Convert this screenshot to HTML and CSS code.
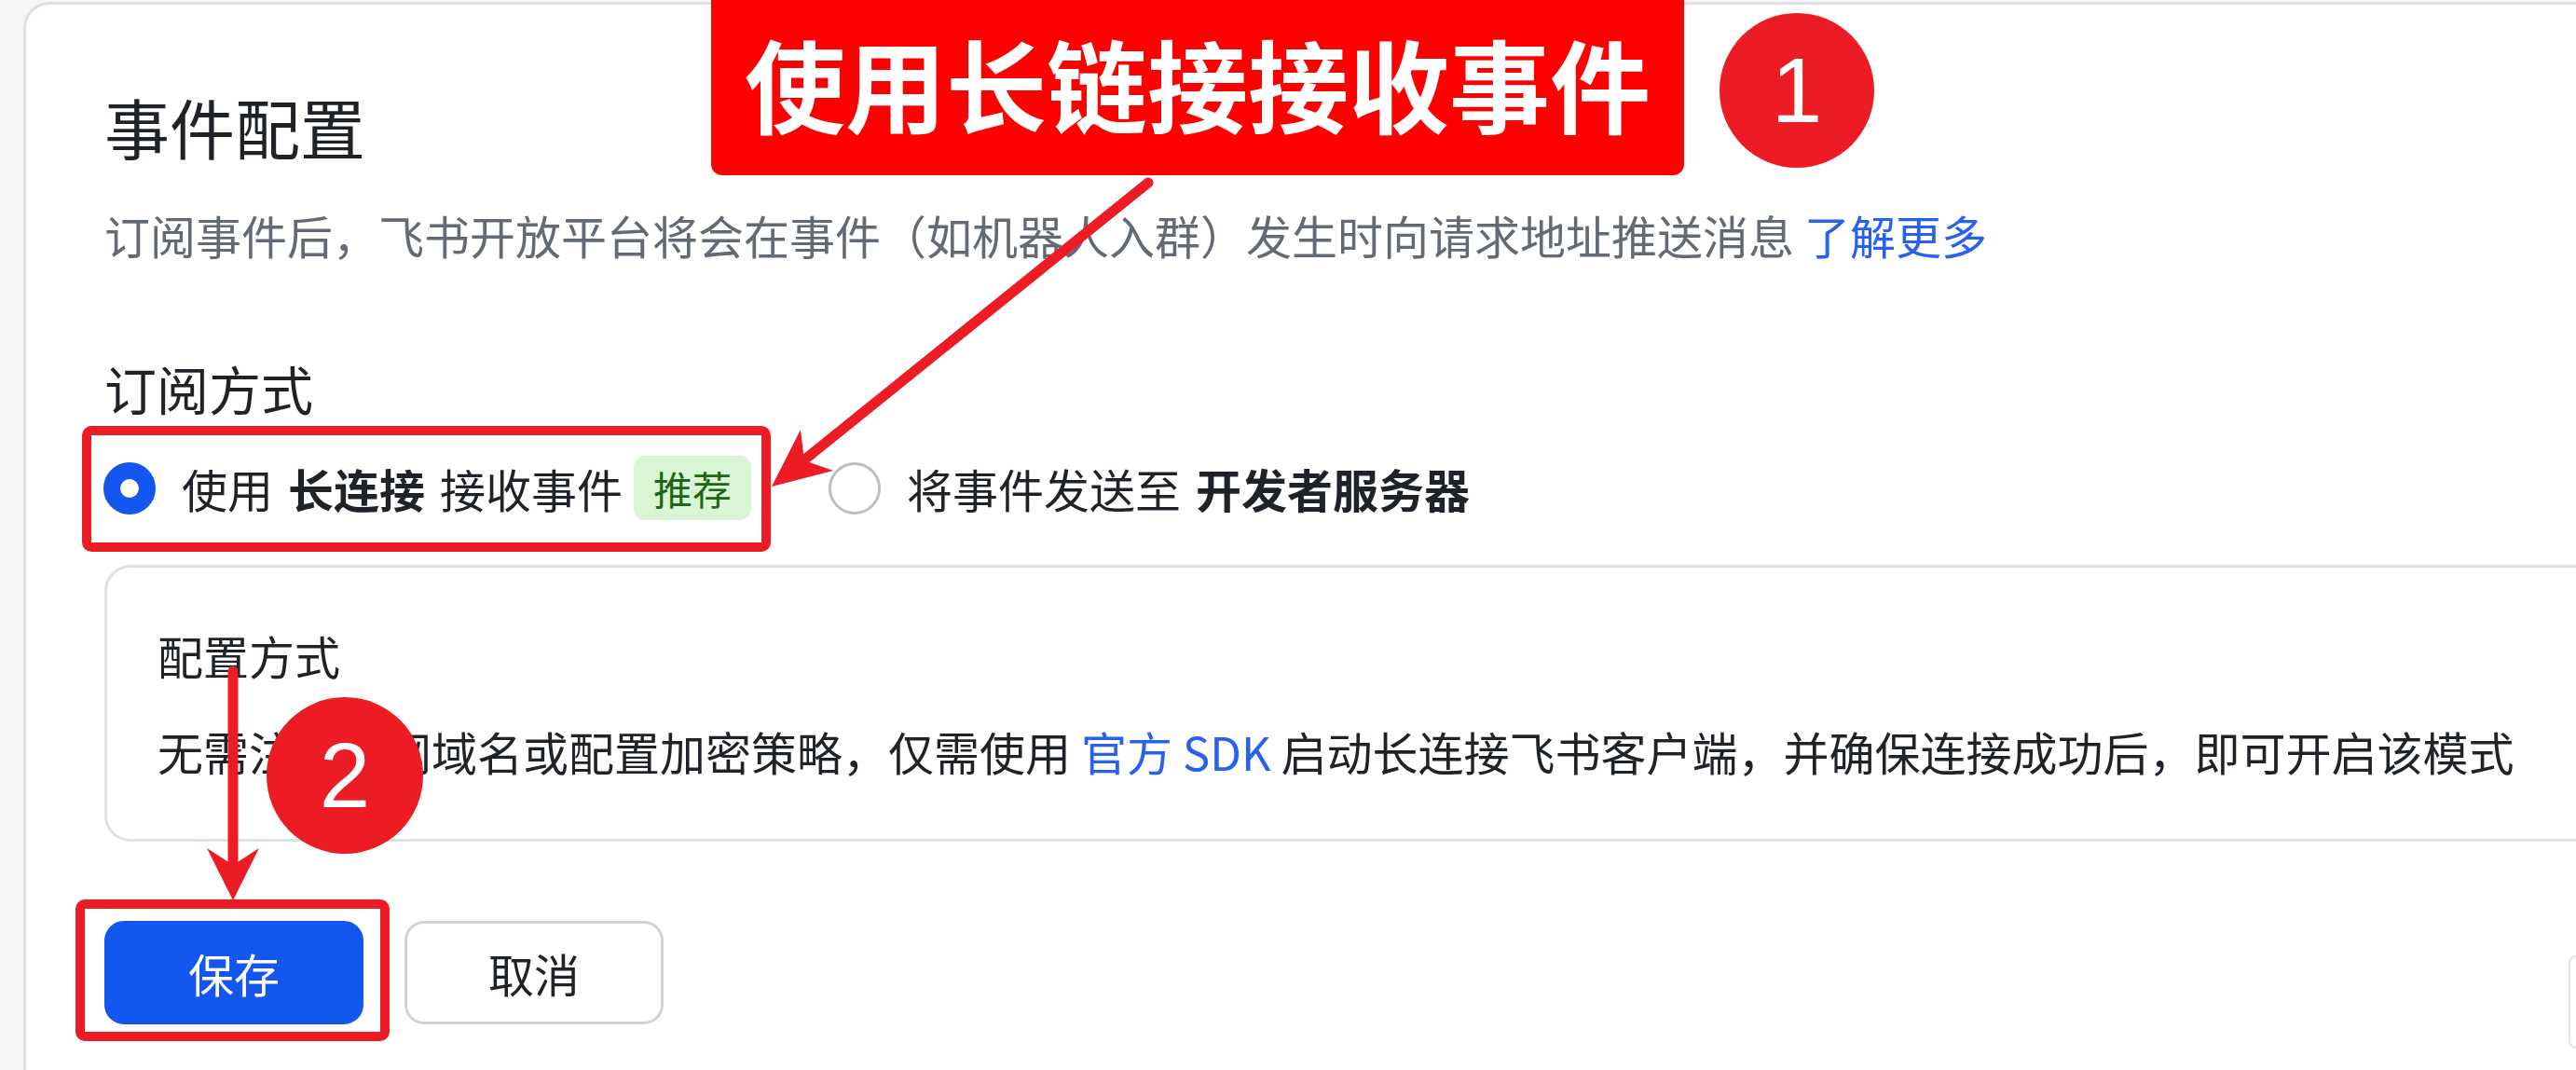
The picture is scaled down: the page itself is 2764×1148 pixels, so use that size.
FILE: index.html
```html
<!DOCTYPE html>
<html lang="zh-CN">
<head>
    <meta charset="UTF-8">
    <meta name="viewport" content="width=device-width, initial-scale=1.0">
    <title>事件配置</title>
    <link rel="stylesheet" href="styles.css">
</head>
<body>

<div class="page">
    <div class="card">
        <h1 class="title">事件配置</h1>
        <p class="desc">订阅事件后，飞书开放平台将会在事件（如机器人入群）发生时向请求地址推送消息 <a class="link">了解更多</a></p>

        <div class="field-label">订阅方式</div>
        <div class="radio-group">
            <label class="radio checked">
                <span class="dot"></span>
                <span class="radio-text">使用 <b>长连接</b> 接收事件</span>
                <span class="tag">推荐</span>
            </label>
            <label class="radio">
                <span class="dot"></span>
                <span class="radio-text">将事件发送至 <b>开发者服务器</b></span>
            </label>
        </div>

        <div class="info-box">
            <div class="info-title">配置方式</div>
            <div class="info-text">无需注册公网域名或配置加密策略，仅需使用 <a class="link">官方 SDK</a> 启动长连接飞书客户端，并确保连接成功后，即可开启该模式</div>
        </div>

        <div class="actions">
            <button class="btn btn-primary">保存</button>
            <button class="btn">取消</button>
        </div>
    </div>
</div>

<div class="float-btn"></div>

<!-- 标注层 -->
<svg class="marks" width="2764" height="1148" viewBox="0 0 2764 1148">
    <rect x="93" y="462" width="729" height="125" rx="5" />
    <rect x="86" y="970" width="327" height="142" rx="5" />
    <line x1="1232" y1="196" x2="866" y2="491" />
    <polygon points="828,522 894,505 863,494 859,461" />
    <line x1="250" y1="720" x2="250" y2="932" />
    <polygon points="250,966 278,910 250,928 222,910" />
</svg>

<div class="callout">使用长链接接收事件</div>
<div class="step step-1">1</div>
<div class="step step-2">2</div>

</body>
</html>
```

FILE: styles.css
```css
html, body {
    margin: 0;
    width: 2764px;
    height: 1148px;
    overflow: hidden;
}

body {
    position: relative;
    background-color: #f5f6f7;
    font-family: "Noto Sans CJK SC", "Noto Sans", sans-serif;
    color: #1f2329;
}

.page {
    display: flex;
    flex-direction: column;
    box-sizing: border-box;
    height: 1148px;
    padding: 2px 0 0 25px;
}

/* 卡片右侧和底部被截在画面外，所以不画边框 */
.card {
    flex: 1;
    padding: 82px 0 0 84px;
    background-color: #fff;
    border: 3px solid #dee0e3;
    border-right: 0;
    border-bottom: 0;
    border-radius: 28px 0 0 0;
}

.title {
    margin: 0;
    font-size: 70px;
    font-weight: 400;
    line-height: 98px;
}

.desc {
    margin: 28px 0 0;
    font-size: 49px;
    line-height: 77px;
    color: #646a73;
    white-space: nowrap;
}

.link {
    color: #2860f0;
    text-decoration: none;
}

.field-label {
    margin-top: 84px;
    font-size: 56px;
    line-height: 84px;
}

.radio-group {
    display: flex;
    align-items: center;
    height: 77px;
    margin-top: 27px;
}

.radio {
    display: flex;
    align-items: center;
}

.radio + .radio {
    margin-left: 84px;
}

.dot {
    box-sizing: border-box;
    width: 56px;
    height: 56px;
    margin: 0 28px 0 -1px;
    border: 3px solid #bbbfc4;
    border-radius: 50%;
    background-color: #fff;
}

.checked .dot {
    border: 18px solid #1456f0;
}

.radio-text {
    font-size: 49px;
    line-height: 77px;
    word-spacing: 5px;
    white-space: nowrap;
}

.radio-text b {
    font-weight: 700;
}

.tag {
    height: 69px;
    margin-left: 12px;
    padding: 0 21px;
    border-radius: 12px;
    background-color: #d9f5d6;
    color: #1d6616;
    font-size: 42px;
    line-height: 69px;
}

.info-box {
    margin-top: 44px;
    padding: 55px 0 56px 54px;
    border: 3px solid #dee0e3;
    border-right: 0;
    border-radius: 28px 0 0 28px;
}

.info-title,
.info-text {
    font-size: 49px;
    line-height: 77px;
    white-space: nowrap;
}

.info-text {
    margin-top: 26px;
}

.actions {
    display: flex;
    gap: 44px;
    margin-top: 85px;
}

.btn {
    width: 278px;
    height: 111px;
    border: 3px solid #d0d3d6;
    border-radius: 21px;
    background-color: #fff;
    color: #1f2329;
    font-family: inherit;
    font-size: 49px;
}

.btn-primary {
    border-color: #1456f0;
    background-color: #1456f0;
    color: #fff;
}

/* 右下角只露出一点的悬浮按钮 */
.float-btn {
    position: absolute;
    left: 2756px;
    top: 1025px;
    width: 8px;
    height: 100px;
    box-sizing: border-box;
    border: 2px solid #e4e5e7;
    border-right: 0;
    border-radius: 50px 0 0 50px;
    background-color: #fff;
}

/* 标注 */
.marks {
    position: absolute;
    top: 0;
    left: 0;
    pointer-events: none;
}

.marks rect {
    fill: none;
    stroke: #ed1c24;
    stroke-width: 10;
}

.marks line {
    stroke: #ed1c24;
    stroke-width: 11;
    stroke-linecap: round;
}

.marks polygon {
    fill: #ed1c24;
}

.callout {
    position: absolute;
    left: 763px;
    top: 0;
    width: 1044px;
    height: 188px;
    display: flex;
    align-items: center;
    justify-content: center;
    padding-bottom: 12px;
    box-sizing: border-box;
    border-radius: 0 0 12px 12px;
    background-color: #ff0000;
    color: #fff;
    font-size: 108px;
    font-weight: 700;
    line-height: 1;
    white-space: nowrap;
}

.step {
    position: absolute;
    width: 166px;
    height: 166px;
    display: flex;
    align-items: center;
    justify-content: center;
    border-radius: 50%;
    background-color: #ed1c24;
    color: #fff;
    font-family: "Liberation Sans", Arial, sans-serif;
    font-size: 98px;
    line-height: 1;
}

.step-1 {
    left: 1845px;
    top: 14px;
}

.step-2 {
    left: 286px;
    top: 748px;
    width: 168px;
    height: 168px;
}
```
